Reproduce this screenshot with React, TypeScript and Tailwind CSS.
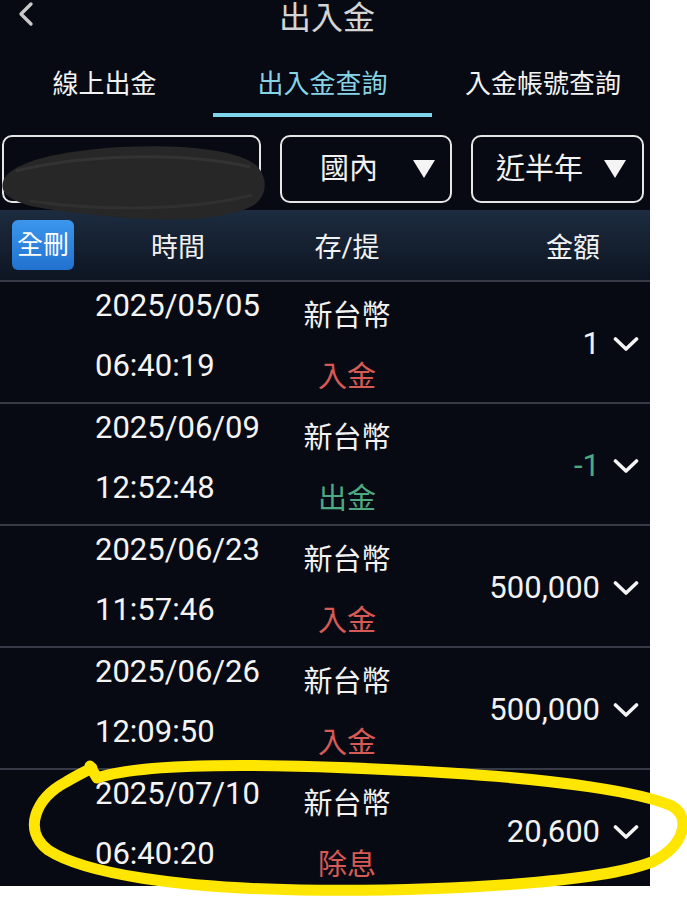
import React from "react";

type Row = {
  date: string;
  time: string;
  kind: string;
  kindColor: string;
  amount: string;
  amountColor: string;
};

const rows: Row[] = [
  { date: "2025/05/05", time: "06:40:19", kind: "入金", kindColor: "text-[#d65a55]", amount: "1", amountColor: "text-[#f2f2f2]" },
  { date: "2025/06/09", time: "12:52:48", kind: "出金", kindColor: "text-[#4ea882]", amount: "-1", amountColor: "text-[#4ea882]" },
  { date: "2025/06/23", time: "11:57:46", kind: "入金", kindColor: "text-[#d65a55]", amount: "500,000", amountColor: "text-[#f2f2f2]" },
  { date: "2025/06/26", time: "12:09:50", kind: "入金", kindColor: "text-[#d65a55]", amount: "500,000", amountColor: "text-[#f2f2f2]" },
  { date: "2025/07/10", time: "06:40:20", kind: "除息", kindColor: "text-[#d65a55]", amount: "20,600", amountColor: "text-[#f2f2f2]" },
];

function Chevron() {
  return (
    <svg width="26" height="16" viewBox="0 0 26 16" className="ml-[13px]">
      <polyline points="2.5,3 13,13 23.5,3" fill="none" stroke="#f4f4f4" strokeWidth="3.6" strokeLinecap="round" strokeLinejoin="round" />
    </svg>
  );
}

function Caret() {
  return (
    <svg width="24" height="20" viewBox="0 0 24 20">
      <polygon points="1,1 23,1 12,19" fill="#f4f4f4" />
    </svg>
  );
}

export default function App() {
  return (
    <div className="relative w-[687px] h-[900px] bg-white overflow-hidden font-['Roboto','Noto_Sans_CJK_TC',sans-serif]">
      <div className="w-[650px] h-[886px] bg-[#080a13] flex flex-col overflow-hidden">
        {/* Title bar */}
        <div className="relative h-[36px] shrink-0 flex items-center justify-center">
          <svg width="20" height="26" viewBox="0 0 20 26" className="absolute left-[16px] top-[1px]">
            <polyline points="15,3 5,13 15,23" fill="none" stroke="#c9c9c9" strokeWidth="3.4" strokeLinecap="round" strokeLinejoin="round" />
          </svg>
          <span className="text-[32px] leading-[36px] text-[#d4d4d4] ml-[4px]">出入金</span>
        </div>

        {/* Tabs */}
        <div className="flex shrink-0 pt-[32px]">
          <div className="w-[213px] flex flex-col items-center">
            <span className="text-[26px] leading-[32px] text-[#f2f2f2] -ml-[4px]">線上出金</span>
            <div className="mt-[13px] h-[4px] w-full" />
          </div>
          <div className="w-[219px] flex flex-col items-center">
            <span className="text-[26px] leading-[32px] text-[#86d3e6]">出入金查詢</span>
            <div className="mt-[13px] h-[4px] w-full bg-[#7ed4ea]" />
          </div>
          <div className="flex-1 flex flex-col items-center">
            <span className="text-[26px] leading-[32px] text-[#f2f2f2] ml-[4px]">入金帳號查詢</span>
            <div className="mt-[13px] h-[4px] w-full" />
          </div>
        </div>

        {/* Filters */}
        <div className="flex shrink-0 mt-[18px] pl-[2px] gap-[19px]">
          <div className="relative w-[259px] h-[68px] rounded-[10px] border-2 border-[#e6e6e6]">
            <svg width="270" height="84" viewBox="0 0 270 84" className="absolute -left-[4px] top-[2px] overflow-visible">
              <path
                d="M4 40 C 14 22, 60 12, 120 8 C 180 5, 236 10, 256 26 C 268 38, 268 56, 254 66 C 234 78, 190 82, 150 80 C 110 78, 70 74, 36 68 C 10 62, -2 54, 4 40 Z"
                fill="#272727"
              />
              <path d="M16 32 C 80 16, 180 12, 250 28" fill="none" stroke="#333" strokeWidth="3" />
              <path d="M30 62 C 100 72, 190 72, 252 56" fill="none" stroke="#303030" strokeWidth="3" />
            </svg>
          </div>
          <div className="w-[172px] h-[68px] rounded-[10px] border-2 border-[#e6e6e6] flex items-center pl-[38px]">
            <span className="text-[29px] leading-[36px] text-[#f2f2f2]">國內</span>
            <span className="ml-[34px] flex"><Caret /></span>
          </div>
          <div className="w-[173px] h-[68px] rounded-[10px] border-2 border-[#e6e6e6] flex items-center pl-[23px]">
            <span className="text-[29px] leading-[36px] text-[#f2f2f2]">近半年</span>
            <span className="ml-[20px] flex"><Caret /></span>
          </div>
        </div>

        {/* Header */}
        <div className="mt-[7px] h-[70px] shrink-0 bg-linear-to-b from-[#1d2c40] to-[#0d1522] flex items-center">
          <div className="ml-[12px] w-[62px] h-[50px] rounded-[6px] bg-linear-to-b from-[#3b96ec] to-[#2272cf] flex items-center justify-center">
            <span className="text-[26px] leading-[30px] text-white">全刪</span>
          </div>
          <div className="w-[208px] pt-[6px] text-center text-[27px] leading-[32px] text-[#f2f2f2]">時間</div>
          <div className="w-[130px] pt-[6px] text-center text-[27px] leading-[32px] text-[#f2f2f2]">存/提</div>
          <div className="ml-[84px] w-[154px] pt-[6px] text-center text-[27px] leading-[32px] text-[#f2f2f2]">金額</div>
        </div>
        <div className="h-[2px] shrink-0 bg-[#363b47]" />

        {/* Rows */}
        {rows.map((r, i) => (
          <div key={i} className="flex h-[122px] shrink-0 border-b-2 border-[#363b47] pl-[95px]">
            <div className="w-[187px] flex flex-col pt-[4px] gap-[20px] text-[31px] leading-[40px] text-[#f4f4f4]">
              <span>{r.date}</span>
              <span>{r.time}</span>
            </div>
            <div className="w-[130px] flex flex-col items-center pt-[14px] gap-[21px] text-[29px] leading-[40px]">
              <span className="text-[#f2f2f2]">新台幣</span>
              <span className={r.kindColor}>{r.kind}</span>
            </div>
            <div className="flex-1 flex items-center justify-end pr-[11px] pt-[4px]">
              <span className={`text-[31px] leading-[40px] ${r.amountColor}`}>{r.amount}</span>
              <Chevron />
            </div>
          </div>
        ))}
      </div>

      {/* Yellow annotation */}
      <svg width="687" height="900" viewBox="0 0 687 900" className="absolute left-0 top-0 pointer-events-none">
        <path
          d="M90 766 L 97 778 C 150 760, 300 764, 450 773 C 560 780, 640 792, 672 806 C 692 818, 684 846, 652 862 C 600 882, 450 892, 300 890 C 180 888, 85 874, 48 850 C 22 830, 36 798, 66 782 C 76 776, 84 772, 92 768"
          fill="none"
          stroke="#ffe600"
          strokeWidth="11"
          strokeLinecap="round"
          strokeLinejoin="round"
        />
      </svg>
    </div>
  );
}
